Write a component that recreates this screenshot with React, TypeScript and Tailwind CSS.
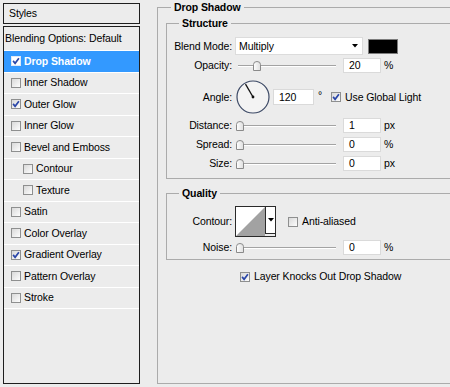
import type { ReactNode } from 'react';

interface Effect {
  name: string;
  checked?: boolean;
  selected?: boolean;
  indent?: boolean;
}

const effects: Effect[] = [
  { name: 'Drop Shadow', checked: true, selected: true },
  { name: 'Inner Shadow' },
  { name: 'Outer Glow', checked: true },
  { name: 'Inner Glow' },
  { name: 'Bevel and Emboss' },
  { name: 'Contour', indent: true },
  { name: 'Texture', indent: true },
  { name: 'Satin' },
  { name: 'Color Overlay' },
  { name: 'Gradient Overlay', checked: true },
  { name: 'Pattern Overlay' },
  { name: 'Stroke' },
];

function CheckBox({ checked, onBlue }: { checked?: boolean; onBlue?: boolean }) {
  return (
    <span
      className={`flex items-center justify-center w-[10px] h-[10px] shrink-0 border ${
        onBlue ? 'border-[#dfe9f7] bg-white' : 'border-[#8e8f8f] bg-linear-to-br from-[#d9d9d9] to-[#fdfdfd]'
      }`}
    >
      {checked && (
        <svg width="8" height="8" viewBox="0 0 8 8">
          <path d="M1.1 3.9 L3.1 6.3 L6.9 1.2" fill="none" stroke="#2a46a8" strokeWidth="1.7" />
        </svg>
      )}
    </span>
  );
}

function DownArrow() {
  return (
    <svg width="6" height="4" viewBox="0 0 6 4">
      <path d="M0 0 H6 L3 3.5 Z" fill="#000" />
    </svg>
  );
}

function Row({ label, className, children }: { label: string; className: string; children: ReactNode }) {
  return (
    <div className={`flex items-center ${className}`}>
      <span className="w-[65px] text-right shrink-0">{label}</span>
      {children}
    </div>
  );
}

function Slider({ value }: { value: number }) {
  return (
    <div className="relative ml-[3px] w-[101px] h-[15px] shrink-0">
      <div className="absolute left-[3px] right-0 top-[7px] h-[2px] border-t border-t-[#a3a3a3] border-b border-b-white" />
      <svg
        className="absolute top-[3px]"
        style={{ left: 1 + value * 0.85 }}
        width="8"
        height="10"
        viewBox="0 0 8 10"
      >
        <defs>
          <linearGradient id="thumb" x1="0" y1="0" x2="1" y2="0">
            <stop offset="0" stopColor="#ffffff" />
            <stop offset="1" stopColor="#dedede" />
          </linearGradient>
        </defs>
        <path d="M0.5 3.5 Q0.5 0.5 4 0.5 Q7.5 0.5 7.5 3.5 V9.5 H0.5 Z" fill="url(#thumb)" stroke="#8a8a8a" />
      </svg>
    </div>
  );
}

function NumBox({ value, className }: { value: string; className: string }) {
  return (
    <span className={`flex items-center h-[15px] bg-white border border-[#dadada] pl-[5px] shrink-0 ${className}`}>
      {value}
    </span>
  );
}

function AngleDial() {
  return (
    <svg className="ml-[4px] shrink-0" width="34" height="34" viewBox="0 0 34 34">
      <circle cx="17" cy="17" r="16" fill="#f3f3f3" stroke="#3d4a66" strokeWidth="1.2" />
      <line x1="17" y1="17" x2="9.5" y2="4.2" stroke="#111" strokeWidth="1.3" />
      <circle cx="17" cy="17" r="1.4" fill="#111" />
    </svg>
  );
}

export default function App() {
  return (
    <div className="w-[450px] h-[387px] overflow-hidden bg-[#ececec] flex items-start text-[10.5px] tracking-[-0.1px] leading-[13px] text-black font-['Liberation_Sans',Arial,sans-serif]">
      <aside className="ml-[3px] mt-[3px] w-[137px] shrink-0 flex flex-col">
        <div className="h-[21px] border border-[#1e1e1e] flex items-center pl-[5px]">Styles</div>
        <div className="mt-[2px] h-[358px] border border-[#1e1e1e]">
          <div className="h-[24px] border-b border-white flex items-center pl-[1px]">Blending Options: Default</div>
          {effects.map((fx) => (
            <div
              key={fx.name}
              className={`h-[21.5px] border-b border-white flex items-center gap-[3px] ${
                fx.indent ? 'pl-[19px]' : 'pl-[7px]'
              } ${fx.selected ? 'bg-[#3399ff] text-white font-bold' : ''}`}
            >
              <CheckBox checked={fx.checked} onBlue={fx.selected} />
              <span>{fx.name}</span>
            </div>
          ))}
        </div>
      </aside>

      <fieldset className="ml-[17px] w-[300px] h-[384px] shrink-0 border border-[#ababab]">
        <legend className="ml-[13px] px-[3px] font-bold leading-[15px]">Drop Shadow</legend>

        <fieldset className="ml-[8px] mt-[1px] w-[290px] h-[163px] border border-[#ababab]">
          <legend className="ml-[12px] px-[3px] font-bold leading-[15px]">Structure</legend>

          <Row label="Blend Mode:" className="mt-[6px] h-[18px]">
            <div className="ml-[3px] w-[128px] h-[18px] bg-white border border-[#dcdcdc] flex items-center justify-between pl-[3px] pr-[4px]">
              <span>Multiply</span>
              <DownArrow />
            </div>
            <span className="ml-[5px] w-[30px] h-[15px] bg-black border border-[#7c7c7c]" />
          </Row>

          <Row label="Opacity:" className="mt-[3px] h-[15px]">
            <Slider value={20} />
            <NumBox value="20" className="ml-[7px] w-[38px]" />
            <span className="ml-[3px]">%</span>
          </Row>

          <Row label="Angle:" className="mt-[7px] h-[34px]">
            <AngleDial />
            <NumBox value="120" className="ml-[3px] w-[41px] h-[16px]" />
            <span className="ml-[4px] w-[13px] self-start mt-[9px]">°</span>
            <CheckBox checked />
            <span className="ml-[4px]">Use Global Light</span>
          </Row>

          <Row label="Distance:" className="mt-[4px] h-[15px]">
            <Slider value={0} />
            <NumBox value="1" className="ml-[7px] w-[38px]" />
            <span className="ml-[3px]">px</span>
          </Row>

          <Row label="Spread:" className="mt-[4px] h-[15px]">
            <Slider value={0} />
            <NumBox value="0" className="ml-[7px] w-[38px]" />
            <span className="ml-[3px]">%</span>
          </Row>

          <Row label="Size:" className="mt-[4px] h-[15px]">
            <Slider value={0} />
            <NumBox value="0" className="ml-[7px] w-[38px]" />
            <span className="ml-[3px]">px</span>
          </Row>
        </fieldset>

        <fieldset className="ml-[8px] mt-[7px] w-[290px] h-[74px] border border-[#ababab]">
          <legend className="ml-[12px] px-[3px] font-bold leading-[15px]">Quality</legend>

          <Row label="Contour:" className="mt-[5px] h-[31px]">
            <div className="ml-[3px] w-[41px] h-[31px] border border-[#2a2a2a] flex shrink-0">
              <svg width="29" height="29" viewBox="0 0 29 29" className="bg-white">
                <polygon points="0,29 29,0 29,29" fill="#a2a2a2" />
              </svg>
              <div className="w-[10px] h-[27px] border-l border-b border-[#2a2a2a] bg-white flex justify-center pt-[11px]">
                <DownArrow />
              </div>
            </div>
            <span className="ml-[12px]">
              <CheckBox />
            </span>
            <span className="ml-[4px]">Anti-aliased</span>
          </Row>

          <Row label="Noise:" className="mt-[3px] h-[15px]">
            <Slider value={0} />
            <NumBox value="0" className="ml-[7px] w-[38px]" />
            <span className="ml-[3px]">%</span>
          </Row>
        </fieldset>

        <div className="ml-[82px] mt-[10px] flex items-center gap-[4px]">
          <CheckBox checked />
          <span>Layer Knocks Out Drop Shadow</span>
        </div>
      </fieldset>
    </div>
  );
}
